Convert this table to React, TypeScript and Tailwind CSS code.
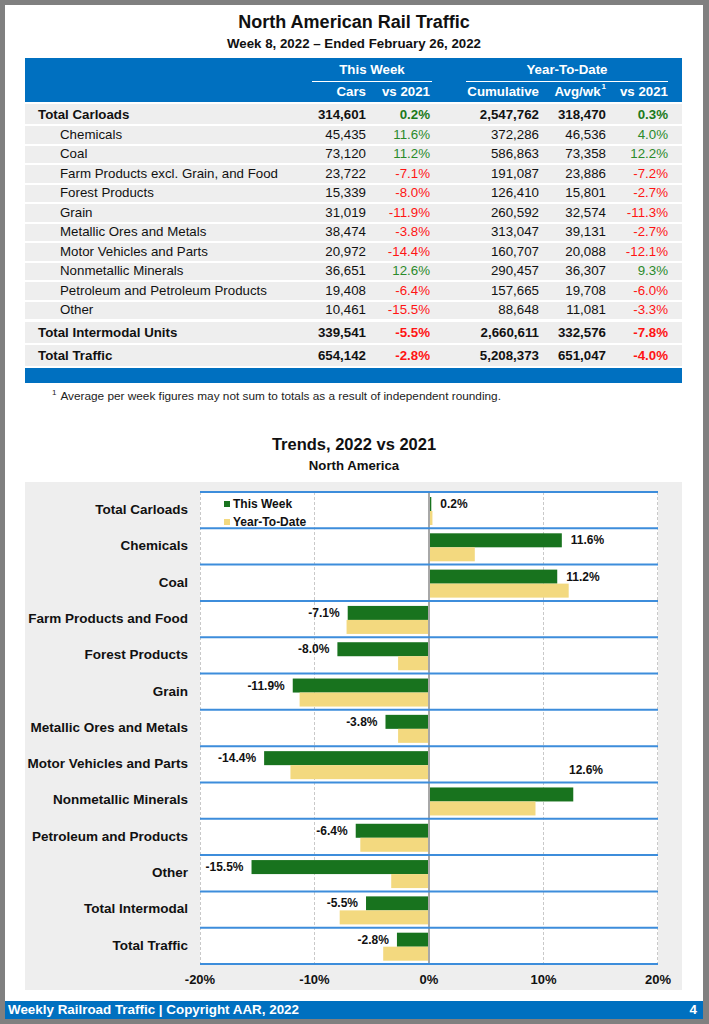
import React from "react";

type Row = {
  label: string;
  bold?: boolean;
  cars: string;
  vs: string;
  cum: string;
  avg: string;
  vs2: string;
};

const rows: Row[] = [
  { label: "Total Carloads", bold: true, cars: "314,601", vs: "0.2%", cum: "2,547,762", avg: "318,470", vs2: "0.3%" },
  { label: "Chemicals", cars: "45,435", vs: "11.6%", cum: "372,286", avg: "46,536", vs2: "4.0%" },
  { label: "Coal", cars: "73,120", vs: "11.2%", cum: "586,863", avg: "73,358", vs2: "12.2%" },
  { label: "Farm Products excl. Grain, and Food", cars: "23,722", vs: "-7.1%", cum: "191,087", avg: "23,886", vs2: "-7.2%" },
  { label: "Forest Products", cars: "15,339", vs: "-8.0%", cum: "126,410", avg: "15,801", vs2: "-2.7%" },
  { label: "Grain", cars: "31,019", vs: "-11.9%", cum: "260,592", avg: "32,574", vs2: "-11.3%" },
  { label: "Metallic Ores and Metals", cars: "38,474", vs: "-3.8%", cum: "313,047", avg: "39,131", vs2: "-2.7%" },
  { label: "Motor Vehicles and Parts", cars: "20,972", vs: "-14.4%", cum: "160,707", avg: "20,088", vs2: "-12.1%" },
  { label: "Nonmetallic Minerals", cars: "36,651", vs: "12.6%", cum: "290,457", avg: "36,307", vs2: "9.3%" },
  { label: "Petroleum and Petroleum Products", cars: "19,408", vs: "-6.4%", cum: "157,665", avg: "19,708", vs2: "-6.0%" },
  { label: "Other", cars: "10,461", vs: "-15.5%", cum: "88,648", avg: "11,081", vs2: "-3.3%" },
];

const totals: Row[] = [
  { label: "Total Intermodal Units", bold: true, cars: "339,541", vs: "-5.5%", cum: "2,660,611", avg: "332,576", vs2: "-7.8%" },
  { label: "Total Traffic", bold: true, cars: "654,142", vs: "-2.8%", cum: "5,208,373", avg: "651,047", vs2: "-4.0%" },
];

const chartData: { label: string; week: number; ytd: number }[] = [
  { label: "Total Carloads", week: 0.2, ytd: 0.3 },
  { label: "Chemicals", week: 11.6, ytd: 4.0 },
  { label: "Coal", week: 11.2, ytd: 12.2 },
  { label: "Farm Products and Food", week: -7.1, ytd: -7.2 },
  { label: "Forest Products", week: -8.0, ytd: -2.7 },
  { label: "Grain", week: -11.9, ytd: -11.3 },
  { label: "Metallic Ores and Metals", week: -3.8, ytd: -2.7 },
  { label: "Motor Vehicles and Parts", week: -14.4, ytd: -12.1 },
  { label: "Nonmetallic Minerals", week: 12.6, ytd: 9.3 },
  { label: "Petroleum and Products", week: -6.4, ytd: -6.0 },
  { label: "Other", week: -15.5, ytd: -3.3 },
  { label: "Total Intermodal", week: -5.5, ytd: -7.8 },
  { label: "Total Traffic", week: -2.8, ytd: -4.0 },
];

function pctClass(v: string, bold?: boolean) {
  if (v.startsWith("-")) return "text-[#ff1414]";
  return bold ? "text-[#1b7a1b]" : "text-[#2a8a2a]";
}

function TableRow({ r, h }: { r: Row; h: string }) {
  return (
    <div className={`flex items-center bg-[#eeeeee] ${h} ${r.bold ? "font-bold" : ""}`}>
      <div className={`flex-1 ${r.bold ? "pl-[13px]" : "pl-[35px]"}`}>{r.label}</div>
      <div className="w-[80px] text-right">{r.cars}</div>
      <div className={`w-[64px] text-right ${pctClass(r.vs, r.bold)}`}>{r.vs}</div>
      <div className="w-[109px] text-right">{r.cum}</div>
      <div className="w-[67px] text-right">{r.avg}</div>
      <div className={`w-[62px] text-right ${pctClass(r.vs2, r.bold)}`}>{r.vs2}</div>
      <div className="w-[14px]" />
    </div>
  );
}

const PLOT_W = 458;
const PLOT_H = 472;
const ROW_H = PLOT_H / 13;
const SCALE = 229 / 20;
const sx = (v: number) => 229 + v * SCALE;

function Chart() {
  return (
    <svg width={PLOT_W} height={PLOT_H} className="overflow-visible block" style={{ fontFamily: '"Liberation Sans", Arial, sans-serif' }}>
      <rect x={0} y={0} width={PLOT_W} height={PLOT_H} fill="#ffffff" />
      {[0.5, 114.5, 343.5, 457.5].map((x) => (
        <line key={x} x1={x} x2={x} y1={0} y2={PLOT_H} stroke="#c9c9c9" strokeWidth={1} strokeDasharray="3 2" />
      ))}
      {chartData.map((d, i) => {
        const top = i * ROW_H;
        const wx = Math.min(sx(0), sx(d.week));
        const ww = Math.abs(d.week) * SCALE;
        const yx = Math.min(sx(0), sx(d.ytd));
        const yw = Math.abs(d.ytd) * SCALE;
        let lx = d.week >= 0 ? sx(d.week) + 9 : sx(d.week) - 8;
        let ly = top + 12;
        if (d.label === "Nonmetallic Minerals") {
          lx = 369;
          ly = top - 12;
        }
        return (
          <g key={d.label}>
            <rect x={wx} y={top + 5} width={ww} height={14} fill="#18731e" />
            <rect x={yx} y={top + 19} width={yw} height={14} fill="#f3d97f" />
            <text
              x={lx}
              y={ly}
              textAnchor={d.week >= 0 ? "start" : "end"}
              dominantBaseline="central"
              fontSize={12}
              fontWeight="bold"
              fill="#111111"
            >
              {`${d.week.toFixed(1)}%`}
            </text>
          </g>
        );
      })}
      <line x1={229} x2={229} y1={0} y2={PLOT_H} stroke="#a8a8a8" strokeWidth={2} />
      {Array.from({ length: 14 }).map((_, i) => (
        <line key={i} x1={0} x2={PLOT_W} y1={i * ROW_H} y2={i * ROW_H} stroke="#3d8ddb" strokeWidth={2} />
      ))}
      <rect x={24} y={9} width={6} height={6} fill="#18731e" />
      <text x={33} y={12} dominantBaseline="central" fontSize={12} fontWeight="bold" fill="#111111">
        This Week
      </text>
      <rect x={24} y={27} width={6} height={6} fill="#f3d97f" />
      <text x={33} y={30} dominantBaseline="central" fontSize={12} fontWeight="bold" fill="#111111">
        Year-To-Date
      </text>
    </svg>
  );
}

export default function App() {
  return (
    <div
      className="w-[709px] h-[1024px] bg-[#808080] pt-[5px] pl-[5px] pr-[6px] pb-[5px] text-[#111111]"
      style={{ fontFamily: '"Liberation Sans", Arial, Helvetica, sans-serif' }}
    >
      <div className="flex flex-col h-full bg-white">
        <div className="pt-[6px] text-center">
          <div className="text-[18px] leading-[22px] font-bold">North American Rail Traffic</div>
          <div className="text-[13.3px] leading-[16px] font-bold mt-[3px]">Week 8, 2022 – Ended February 26, 2022</div>
        </div>

        <div className="mt-[6px] ml-[20px] mr-[21px] text-[13.3px]">
          <div className="bg-[#0070c0] text-white font-bold h-[44px] flex flex-col">
            <div className="flex h-[23.5px]">
              <div className="flex-1" />
              <div className="w-[120px] border-b-[1.5px] border-white flex items-center justify-center pt-[2px]">This Week</div>
              <div className="w-[34px]" />
              <div className="w-[202px] border-b-[1.5px] border-white flex items-center justify-center pt-[2px]">Year-To-Date</div>
              <div className="w-[14px]" />
            </div>
            <div className="flex flex-1 items-center">
              <div className="flex-1" />
              <div className="w-[80px] text-right">Cars</div>
              <div className="w-[64px] text-right">vs 2021</div>
              <div className="w-[109px] text-right">Cumulative</div>
              <div className="w-[67px] text-right">
                Avg/wk<span className="text-[8px] align-top relative -top-[1px] ml-[1px]">1</span>
              </div>
              <div className="w-[62px] text-right">vs 2021</div>
              <div className="w-[14px]" />
            </div>
          </div>
          <div className="flex flex-col gap-[2px] mt-[2px]">
            {rows.map((r, i) => (
              <TableRow key={r.label} r={r} h={i === 0 ? "h-[20px] pt-[2px]" : "h-[17.5px]"} />
            ))}
          </div>
          <div className="flex flex-col gap-[2px] mt-[3px]">
            {totals.map((r) => (
              <TableRow key={r.label} r={r} h="h-[21px]" />
            ))}
          </div>
          <div className="bg-[#0070c0] h-[15px] mt-[2px]" />
          <div className="mt-[6px] pl-[27px] text-[11.8px] leading-[14px] text-[#222222] flex">
            <span className="text-[8px] leading-[10px] relative -top-[1px] mr-[4px]">1</span>
            <span>Average per week figures may not sum to totals as a result of independent rounding.</span>
          </div>
        </div>

        <div className="mt-[30px] text-center">
          <div className="text-[16.5px] leading-[22px] font-bold">Trends, 2022 vs 2021</div>
          <div className="text-[13.2px] leading-[16px] font-bold mt-[3px]">North America</div>
        </div>

        <div className="mt-[8px] ml-[20px] mr-[21px] bg-[#eeeeee] pt-[10px] pb-[2px]">
          <div className="flex">
            <div className="w-[175px] flex flex-col pr-[12px]">
              {chartData.map((d) => (
                <div key={d.label} className="flex items-center justify-end text-[13.5px] font-bold" style={{ height: ROW_H }}>
                  {d.label}
                </div>
              ))}
            </div>
            <Chart />
          </div>
          <div className="flex justify-between w-[518px] ml-[145px] mt-[8px] text-[13px] leading-[16px] font-bold">
            {["-20%", "-10%", "0%", "10%", "20%"].map((t) => (
              <div key={t} className="w-[60px] text-center">
                {t}
              </div>
            ))}
          </div>
        </div>

        <div className="mt-auto bg-[#0070c0] h-[18px] flex items-center justify-between text-white font-bold text-[13.4px] pl-[3px] pr-[6px]">
          <span>Weekly Railroad Traffic | Copyright AAR, 2022</span>
          <span>4</span>
        </div>
      </div>
    </div>
  );
}
